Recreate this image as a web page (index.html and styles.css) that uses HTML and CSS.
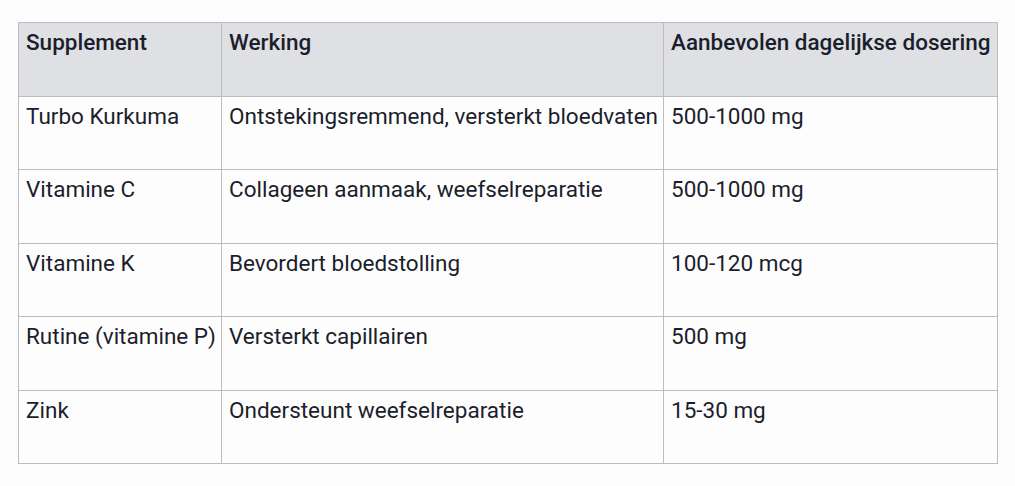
FILE: index.html
```html
<!DOCTYPE html>
<html lang="nl">
<head>
<meta charset="utf-8">
<link rel="stylesheet" href="styles.css">
</head>
<body>
<table class="supp-table">
  <colgroup>
    <col class="c1"><col class="c2"><col class="c3">
  </colgroup>
  <thead>
    <tr><th>Supplement</th><th>Werking</th><th>Aanbevolen dagelijkse dosering</th></tr>
  </thead>
  <tbody>
    <tr><td>Turbo Kurkuma</td><td>Ontstekingsremmend, versterkt bloedvaten</td><td>500-1000 mg</td></tr>
    <tr><td>Vitamine C</td><td>Collageen aanmaak, weefselreparatie</td><td>500-1000 mg</td></tr>
    <tr><td>Vitamine K</td><td>Bevordert bloedstolling</td><td>100-120 mcg</td></tr>
    <tr><td>Rutine (vitamine P)</td><td>Versterkt capillairen</td><td>500 mg</td></tr>
    <tr><td>Zink</td><td>Ondersteunt weefselreparatie</td><td>15-30 mg</td></tr>
  </tbody>
</table>
</body>
</html>
```
FILE: styles.css
```css
html, body {
  margin: 0;
  background: #fdfdfd;
}
body {
  padding: 22px 0 0 18px;
  font-family: Roboto, "Liberation Sans", sans-serif;
  color: #1b1e2c;
}
.supp-table {
  border-collapse: collapse;
  table-layout: fixed;
  width: 979px;
  font-size: 22.5px;
  line-height: 1.4;
}
.c1 { width: 203px; }
.c2 { width: 442px; }
.c3 { width: 334px; }
.supp-table th,
.supp-table td {
  border: 1px solid #bdbdbd;
  padding: 4px 7px;
  height: 64.5px;
  vertical-align: top;
  text-align: left;
  white-space: nowrap;
  overflow: visible;
}
.supp-table th {
  background: #dfe0e4;
  font-weight: 500;
}
```
